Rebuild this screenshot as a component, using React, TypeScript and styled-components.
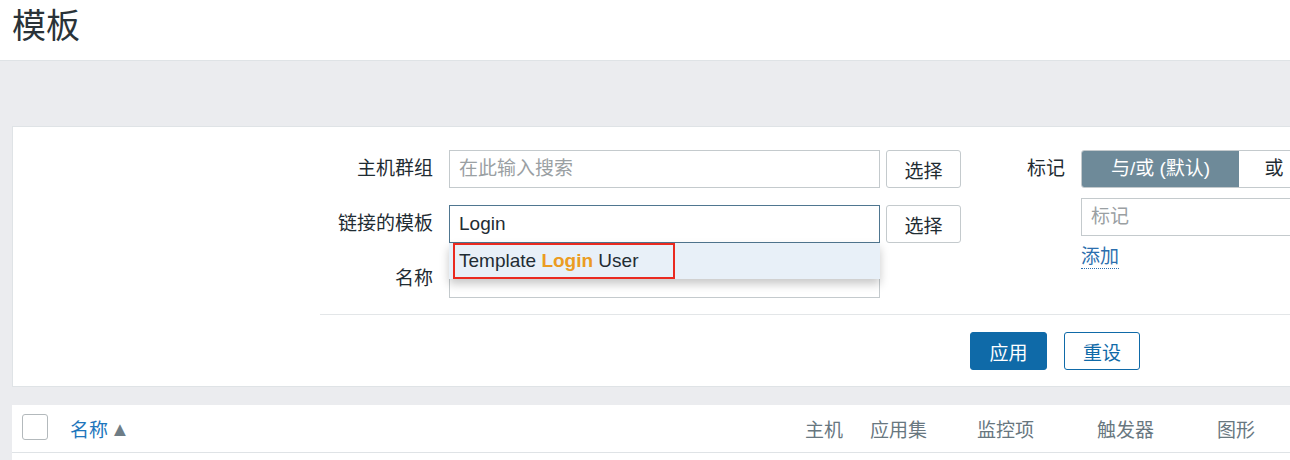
import React from "react";
import styled, { createGlobalStyle } from "styled-components";

const GlobalStyle = createGlobalStyle`
  html, body {
    margin: 0;
    padding: 0;
    background: #ebecef;
    font-family: "Liberation Sans", Arial, "Noto Sans CJK SC", sans-serif;
    color: #1f2c33;
    overflow: hidden;
  }
  * { box-sizing: border-box; }
`;

const Page = styled.div`
  width: 1290px;
  height: 460px;
  overflow: hidden;
`;

const Header = styled.header`
  height: 61px;
  background: #ffffff;
  border-bottom: 1px solid #dfe3e6;
  padding: 4px 0 0 12px;
`;

const Title = styled.h1`
  margin: 0;
  font-size: 34px;
  line-height: 44px;
  font-weight: 400;
  color: #2a3338;
`;

const Main = styled.main`
  padding: 65px 0 0 12px;
`;

const FilterPanel = styled.section`
  background: #ffffff;
  border: 1px solid #dfe3e6;
  border-right: none;
  height: 261px;
  padding-top: 23px;
`;

const FormArea = styled.div`
  display: flex;
  padding-left: 307px;
`;

const Column = styled.div<{ $gap: number }>`
  display: flex;
  flex-direction: column;
  gap: ${(p) => p.$gap}px;
`;

const Row = styled.div`
  display: flex;
  align-items: flex-start;
`;

const Label = styled.label<{ $width: number }>`
  width: ${(p) => p.$width}px;
  margin-right: 16px;
  text-align: right;
  font-size: 19px;
  line-height: 38px;
  color: #1f2c33;
  flex-shrink: 0;
`;

const InputWrap = styled.div`
  position: relative;
`;

const TextInput = styled.div<{ $focused?: boolean; $width: number; $muted?: boolean }>`
  width: ${(p) => p.$width}px;
  height: 38px;
  border: 1px solid ${(p) => (p.$focused ? "#4f7690" : "#c4cacd")};
  background: #ffffff;
  padding: 0 9px;
  font-size: 19px;
  line-height: 36px;
  color: ${(p) => (p.$muted ? "#9aa0a3" : "#1f2c33")};
  white-space: nowrap;
  flex-shrink: 0;
`;

const SelectButton = styled.button`
  width: 75px;
  height: 38px;
  margin-left: 6px;
  border: 1px solid #c4cacd;
  border-radius: 3px;
  background: #ffffff;
  font-family: inherit;
  font-size: 19px;
  color: #1f2c33;
  padding: 0;
  flex-shrink: 0;
`;

const Suggest = styled.div`
  position: absolute;
  left: 0;
  top: 38px;
  width: 431px;
  height: 36px;
  background: #e8f0f8;
  box-shadow: 0 5px 9px rgba(0, 0, 0, 0.22);
  font-size: 19px;
  line-height: 36px;
  padding-left: 10px;
  color: #1f2c33;
  white-space: nowrap;
  z-index: 2;
`;

const Found = styled.span`
  color: #eb9c22;
  font-weight: 700;
`;

const Highlight = styled.div`
  position: absolute;
  left: 4px;
  top: 0;
  width: 222px;
  height: 36px;
  border: 2px solid #ea2a20;
`;

const TagColumn = styled.div`
  display: flex;
  flex-direction: column;
  margin-left: 36px;
`;

const Segmented = styled.div`
  display: flex;
  height: 38px;
  border: 1px solid #c4cacd;
  border-radius: 3px;
  overflow: hidden;
`;

const Segment = styled.div<{ $active?: boolean; $width: number }>`
  width: ${(p) => p.$width}px;
  background: ${(p) => (p.$active ? "#6e8a99" : "#ffffff")};
  color: ${(p) => (p.$active ? "#ffffff" : "#1f2c33")};
  font-size: 19px;
  line-height: 36px;
  text-align: center;
  flex-shrink: 0;
`;

const TagInput = styled(TextInput)`
  margin-top: 10px;
`;

const AddLink = styled.a`
  margin-top: 10px;
  font-size: 19px;
  line-height: 22px;
  color: #2c6fae;
  text-decoration: none;
  border-bottom: 1px dotted #2c6fae;
  align-self: flex-start;
`;

const Separator = styled.hr`
  margin: 16px 0 0 307px;
  border: none;
  border-top: 1px solid #e3e6e8;
  height: 0;
`;

const Actions = styled.div`
  display: flex;
  gap: 17px;
  padding: 17px 0 0 957px;
`;

const ActionButton = styled.button<{ $primary?: boolean }>`
  width: ${(p) => (p.$primary ? 77 : 76)}px;
  height: 38px;
  border-radius: 3px;
  border: 1px solid #0f6aa8;
  background: ${(p) => (p.$primary ? "#0f6aa8" : "#ffffff")};
  color: ${(p) => (p.$primary ? "#ffffff" : "#0f6aa8")};
  font-family: inherit;
  font-size: 19px;
  padding: 0;
`;

const Table = styled.section`
  margin-top: 18px;
  background: #ffffff;
  height: 60px;
`;

const HeaderRow = styled.div`
  display: flex;
  align-items: center;
  height: 48px;
  border-bottom: 1px solid #dfe3e6;
  padding-left: 10px;
  font-size: 19px;
`;

const Checkbox = styled.span`
  width: 26px;
  height: 26px;
  border: 1px solid #b3b9bc;
  border-radius: 3px;
  margin: -4px 22px 0 0;
  flex-shrink: 0;
`;

const NameCell = styled.div`
  flex: 1;
  color: #1e76bc;
  display: flex;
  align-items: center;
  gap: 2px;
`;

const SortArrow = styled.span`
  font-size: 20px;
  line-height: 20px;
  color: #6e7d86;
`;

const HeadCell = styled.div<{ $width: number }>`
  width: ${(p) => p.$width}px;
  color: #68777f;
  flex-shrink: 0;
`;

const columns = [
  { label: "主机", width: 65 },
  { label: "应用集", width: 107 },
  { label: "监控项", width: 120 },
  { label: "触发器", width: 120 },
  { label: "图形", width: 73 },
];

export default function App() {
  return (
    <Page>
      <GlobalStyle />
      <Header>
        <Title>模板</Title>
      </Header>
      <Main>
        <FilterPanel>
          <FormArea>
            <Column $gap={17}>
              <Row>
                <Label $width={113}>主机群组</Label>
                <TextInput $width={431} $muted>在此输入搜索</TextInput>
                <SelectButton>选择</SelectButton>
              </Row>
              <Row>
                <Label $width={113}>链接的模板</Label>
                <InputWrap>
                  <TextInput $width={431} $focused>Login</TextInput>
                  <Suggest>
                    Template <Found>Login</Found> User
                    <Highlight />
                  </Suggest>
                </InputWrap>
                <SelectButton>选择</SelectButton>
              </Row>
              <Row>
                <Label $width={113}>名称</Label>
                <TextInput $width={431} />
              </Row>
            </Column>
            <TagColumn>
              <Row>
                <Label $width={68}>标记</Label>
                <Column $gap={0}>
                  <Segmented>
                    <Segment $active $width={157}>与/或 (默认)</Segment>
                    <Segment $width={70}>或</Segment>
                  </Segmented>
                  <TagInput $width={300} $muted>标记</TagInput>
                  <AddLink>添加</AddLink>
                </Column>
              </Row>
            </TagColumn>
          </FormArea>
          <Separator />
          <Actions>
            <ActionButton $primary>应用</ActionButton>
            <ActionButton>重设</ActionButton>
          </Actions>
        </FilterPanel>
        <Table>
          <HeaderRow>
            <Checkbox />
            <NameCell>
              名称<SortArrow>▲</SortArrow>
            </NameCell>
            {columns.map((c) => (
              <HeadCell key={c.label} $width={c.width}>
                {c.label}
              </HeadCell>
            ))}
          </HeaderRow>
        </Table>
      </Main>
    </Page>
  );
}
